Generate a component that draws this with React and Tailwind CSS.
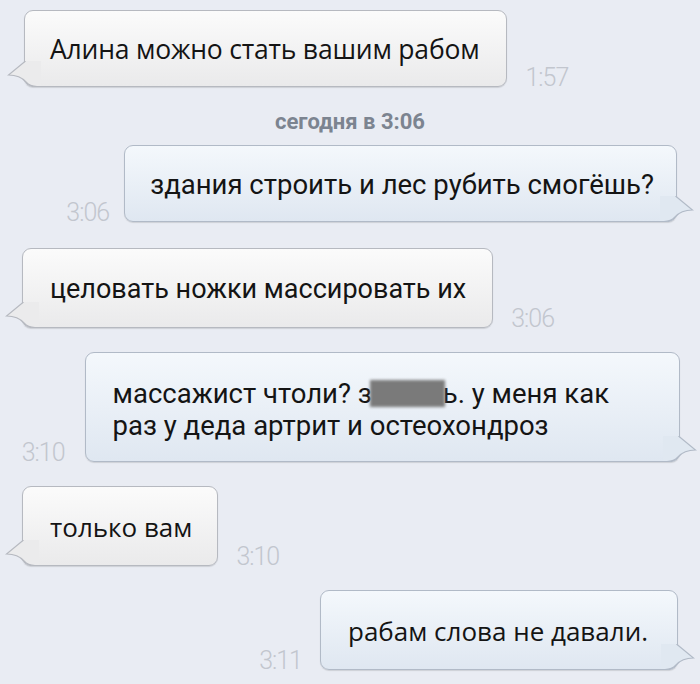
import React from "react";

const inBg = "bg-[linear-gradient(to_bottom,#fbfbfb,#eaeaeb)]";
const outBg = "bg-[linear-gradient(to_bottom,#f4f8fc,#dfe7f1)]";

function TailLeft({ fill, stroke }) {
  return (
    <svg className="absolute left-[-18px] bottom-[-1px]" width="34" height="26" viewBox="0 0 34 26">
      <path d="M19,0 L1.5,14 Q13,14 19,21 Q23,25.5 30,25.5 L34,25.5 L34,0 Z" fill={fill} />
      <path d="M18.5,0 L1.5,14 Q13,14 19,21 Q23,25.5 30,25.5 L34,25.5" fill="none" stroke={stroke} strokeWidth="1.2" />
    </svg>
  );
}

function TailRight({ fill, stroke }) {
  return (
    <svg className="absolute right-[-18px] bottom-[-1px]" width="34" height="26" viewBox="0 0 34 26">
      <path d="M15,0 L32.5,14 Q21,14 15,21 Q11,25.5 4,25.5 L0,25.5 L0,0 Z" fill={fill} />
      <path d="M15.5,0 L32.5,14 Q21,14 15,21 Q11,25.5 4,25.5 L0,25.5" fill="none" stroke={stroke} strokeWidth="1.2" />
    </svg>
  );
}

function Time({ children, className = "" }) {
  return (
    <div
      className={"text-[25px] leading-none text-[#c2c6ce] tracking-[-1px] " + className}
      style={{ fontFamily: "Roboto, 'Liberation Sans', sans-serif", fontWeight: 300 }}
    >
      {children}
    </div>
  );
}

function InBubble({ children, font, time, className = "", timeClass = "ml-[18px]" }) {
  return (
    <div className="flex items-end pl-[24px]">
      <div
        className={
          "relative rounded-[9px] border border-[#b6b9c0] shadow-[0_1px_1px_rgba(0,0,0,0.12)] text-[#141414] whitespace-nowrap " +
          inBg +
          " " +
          className
        }
        style={{ fontFamily: font }}
      >
        {children}
        <TailLeft fill="#ebebec" stroke="#b6b9c0" />
      </div>
      <Time className={"mb-[-3px] " + timeClass}>{time}</Time>
    </div>
  );
}

function OutBubble({ children, font, time, pr, className = "", timeClass = "" }) {
  return (
    <div className={"flex items-end justify-end " + pr}>
      <Time className={"mb-[-3px] " + timeClass}>{time}</Time>
      <div
        className={
          "relative rounded-[9px] border border-[#b1bac7] shadow-[0_1px_1px_rgba(0,0,0,0.12)] text-[#141414] whitespace-nowrap " +
          outBg +
          " " +
          className
        }
        style={{ fontFamily: font }}
      >
        {children}
        <TailRight fill="#e0e8f1" stroke="#b1bac7" />
      </div>
    </div>
  );
}

const droid = "'Open Sans', 'Noto Sans', sans-serif";
const roboto = "Roboto, 'Liberation Sans', sans-serif";

export default function App() {
  return (
    <div className="w-[700px] h-[684px] overflow-hidden bg-[#e9ecf3] pt-[10px] flex flex-col">
      <InBubble font={droid} time="1:57" className="h-[77px] flex items-center pt-[3px] pl-[25px] pr-[27px] text-[26.5px] tracking-[-0.2px]">
        Алина можно стать вашим рабом
      </InBubble>

      <div
        className="h-[58px] flex items-center justify-center text-[22px] font-bold text-[#7c8490] pt-[11px]"
        style={{ fontFamily: roboto }}
      >
        сегодня в 3:06
      </div>

      <OutBubble font={roboto} time="3:06" pr="pr-[23px]" timeClass="mr-[15px]" className="h-[77px] flex items-center pt-[3px] pl-[25px] pr-[22px] text-[27.5px]">
        здания строить и лес рубить смогёшь?
      </OutBubble>

      <div className="h-[26px]" />

      <InBubble font={roboto} time="3:06" className="h-[80px] flex items-center pt-[3px] pl-[27px] pr-[26px] text-[27px] ml-[-2px]">
        целовать ножки массировать их
      </InBubble>

      <div className="h-[24px]" />

      <OutBubble font={roboto} time="3:10" pr="pr-[20px]" timeClass="mr-[20px]" className="h-[110px] flex flex-col justify-center pt-[5px] pl-[27px] pr-[70px] text-[27.5px] leading-[32px]">
        <div>
          массажист чтоли? з
          <span className="inline-block align-[-4px] w-[75px] h-[27px] bg-[#7a7a7a] blur-[1.5px] mx-[-2px]" />
          ь. у меня как
        </div>
        <div>раз у деда артрит и остеохондроз</div>
      </OutBubble>

      <div className="h-[24px]" />

      <InBubble font={droid} time="3:10" className="h-[80px] flex items-center pt-[3px] pl-[27px] pr-[25px] text-[26px] ml-[-2px]">
        только вам
      </InBubble>

      <div className="h-[24px]" />

      <OutBubble font={droid} time="3:11" pr="pr-[22px]" timeClass="mr-[18px]" className="h-[80px] flex items-center pt-[3px] pl-[27px] pr-[29px] text-[26px]">
        рабам слова не давали.
      </OutBubble>
    </div>
  );
}
